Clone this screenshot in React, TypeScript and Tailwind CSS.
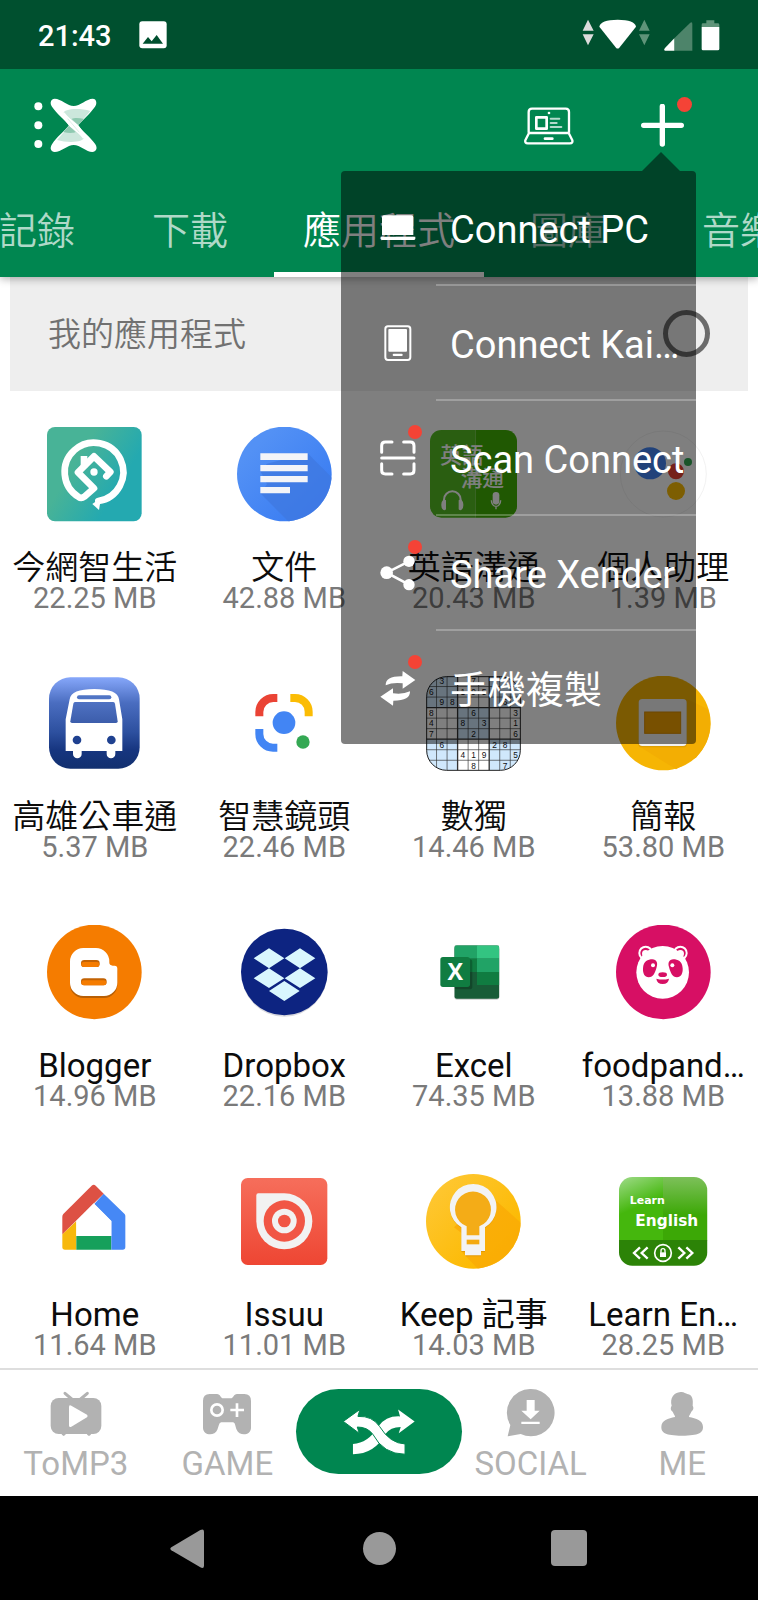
import React from "react";

const sans = "font-[Roboto,'Noto_Sans_CJK_TC',sans-serif]";

function IconFrame({ children }: { children: React.ReactNode }) {
  return (
    <svg viewBox="0 0 285 285" className="size-[95px]" aria-hidden="true">
      {children}
    </svg>
  );
}

function SmartLifeIcon() {
  return (
    <IconFrame>
      <defs>
        <linearGradient id="life" x1="0" y1="0.2" x2="1" y2="0.8">
          <stop offset="0.3" stopColor="#48b397" />
          <stop offset="0.75" stopColor="#24a9b0" />
        </linearGradient>
      </defs>
      <rect width="284" height="283" rx="24" fill="url(#life)" />
      <path
        d="M154 222A88 88 0 1 0 95 210Q103 216 112 209L141 184L93 136L141 88L190 135L178 148"
        fill="none"
        stroke="#fff"
        strokeWidth="20"
        strokeLinejoin="round"
        strokeLinecap="round"
      />
      <rect x="101" y="87" width="20" height="34" fill="#fff" />
      <circle cx="141" cy="135" r="11" fill="#fff" />
      <path d="M136 231L162 212L156 249Z" fill="#fff" />
    </IconFrame>
  );
}

function DocsIcon() {
  return (
    <IconFrame>
      <defs>
        <linearGradient id="docs" x1="0" y1="0" x2="1" y2="1">
          <stop offset="0.2" stopColor="#5391f5" />
          <stop offset="0.8" stopColor="#3c7ef2" />
        </linearGradient>
        <clipPath id="docsClip">
          <circle cx="142" cy="141" r="142" />
        </clipPath>
      </defs>
      <circle cx="142" cy="141" r="142" fill="url(#docs)" />
      <path d="M212 79L300 167V300H171L70 199L90 172L70 132L90 110Z" fill="#3f78e0" opacity="0.75" clipPath="url(#docsClip)" />
      <path d="M70 79H212V99H70ZM70 114H212V133H70ZM70 147H212V166H70ZM70 180H159V199H70Z" fill="#f3f4f8" />
    </IconFrame>
  );
}

function EnglishTalkIcon() {
  return (
    <IconFrame>
      <clipPath id="talkClip">
        <rect x="12" y="9" width="261" height="263" rx="34" />
      </clipPath>
      <g clipPath="url(#talkClip)">
        <path d="M0 0H149V285H0Z" fill="#55bd22" />
        <path d="M149 0H285V285H149Z" fill="#40b104" />
      </g>
      <g fill="#fff" className="font-['Noto_Sans_CJK_TC',sans-serif] font-medium">
        <text x="43" y="107" fontSize="65">英語</text>
        <text x="104" y="176" fontSize="65">溝通</text>
      </g>
      <path d="M54 226V218A25 25 0 0 1 104 218V226" fill="none" stroke="#fff" strokeWidth="6" />
      <path d="M46 232a9 14 0 0 1 14 -12v27a9 14 0 0 1-14-12ZM112 232a9 14 0 0 0-14-12v27a9 14 0 0 0 14-12Z" fill="#fff" />
      <rect x="200" y="195" width="20" height="38" rx="10" fill="#fff" />
      <path d="M196 220a14 18 0 0 0 28 0M210 238V247" fill="none" stroke="#fff" strokeWidth="4" />
    </IconFrame>
  );
}

function AssistantIcon() {
  return (
    <IconFrame>
      <circle cx="142" cy="141" r="129" fill="#fff" stroke="#f2f2f2" strokeWidth="3" />
      <circle cx="102" cy="109" r="48" fill="#4285f4" />
      <circle cx="180" cy="133" r="24" fill="#ea4335" />
      <circle cx="180" cy="192" r="27" fill="#fbbc04" />
      <circle cx="216" cy="105" r="12" fill="#34a853" />
    </IconFrame>
  );
}

function BusIcon() {
  return (
    <IconFrame>
      <defs>
        <linearGradient id="bus" x1="0" y1="0" x2="0" y2="1">
          <stop offset="0" stopColor="#86a7fa" />
          <stop offset="0.28" stopColor="#4a6dc0" />
          <stop offset="0.6" stopColor="#2d509f" />
          <stop offset="0.8" stopColor="#16357f" />
          <stop offset="1" stopColor="#12306f" />
        </linearGradient>
        <linearGradient id="busGlass" x1="0" y1="0" x2="0" y2="1">
          <stop offset="0" stopColor="#4f72c3" />
          <stop offset="1" stopColor="#3c5dab" />
        </linearGradient>
      </defs>
      <rect x="6" y="4" width="272" height="274" rx="64" fill="url(#bus)" />
      <path
        d="M68 70Q72 39 142 39Q212 39 216 70L226 130V225H205V234A13 13 0 0 1 179 234V225H104V234A13 13 0 0 1 78 234V225H56V130Z"
        fill="#fff"
      />
      <path d="M84 78H199Q203 78 204 83L212 136Q212 141 207 141H75Q70 141 70 136L79 83Q80 78 84 78Z" fill="url(#busGlass)" />
      <rect x="90" y="58" width="103" height="12" rx="6" fill="#5075c5" />
      <circle cx="90" cy="192" r="13" fill="#1f4190" />
      <circle cx="193" cy="192" r="13" fill="#1f4190" />
    </IconFrame>
  );
}

function LensIcon() {
  return (
    <IconFrame>
      <g fill="none" strokeWidth="24">
        <path d="M121 66H109A42 42 0 0 0 67 108V121" stroke="#ea4335" />
        <path d="M160 66H174A41 41 0 0 1 215 107V121" stroke="#fbbc04" />
        <path d="M67 159V174A41 41 0 0 0 108 215H121" stroke="#4285f4" />
      </g>
      <circle cx="141" cy="140" r="34" fill="#4285f4" />
      <circle cx="198" cy="198" r="20" fill="#34a853" />
    </IconFrame>
  );
}

const sudoku = [
  " 3  7    ",
  "6  195   ",
  " 98    6 ",
  "8   6   3",
  "4  8 3  1",
  "7   2   6",
  " 6    28 ",
  "   419  5",
  "    8  7 ",
];

function SudokuIcon() {
  const lines = [1, 2, 3, 4, 5, 6, 7, 8];
  return (
    <IconFrame>
      <clipPath id="sudokuClip">
        <rect x="1" y="1" width="282" height="282" rx="60" />
      </clipPath>
      <g clipPath="url(#sudokuClip)">
        <rect width="285" height="285" fill="#fff" />
        <path d="M0 0H95V95H0ZM190 0H285V95H190ZM95 95H190V190H95ZM0 190H95V285H0ZM190 190H285V285H190Z" fill="#d0e8fc" />
        {lines.map((n) => (
          <path
            key={n}
            d={`M${n * 31.6} 0V285M0 ${n * 31.6}H285`}
            stroke="#333"
            strokeWidth={n % 3 === 0 ? 4 : 2}
          />
        ))}
      </g>
      <rect x="2" y="2" width="281" height="281" rx="60" fill="none" stroke="#222" strokeWidth="3" />
      <g className="font-['Liberation_Sans',sans-serif]" fontSize="25" fill="#111" textAnchor="middle">
        {sudoku.map((row, r) =>
          row.split("").map((digit, c) =>
            digit === " " ? null : (
              <text key={`${r}-${c}`} x={c * 31.6 + 16} y={r * 31.6 + 25}>
                {digit}
              </text>
            ),
          ),
        )}
      </g>
    </IconFrame>
  );
}

function SlidesIcon() {
  return (
    <IconFrame>
      <circle cx="142" cy="141" r="142" fill="#f6b504" />
      <path d="M212 69L276 100Q300 180 240 245L180 280L68 210Z" fill="#f3ae03" />
      <rect x="67" y="72" width="146" height="142" rx="11" fill="#c98f05" opacity="0.5" />
      <rect x="68" y="69" width="144" height="141" rx="11" fill="#f1f1f1" />
      <rect x="86" y="108" width="108" height="64" fill="#f0a000" stroke="#d98c00" strokeWidth="3" />
    </IconFrame>
  );
}

const bloggerB =
  "M109 69H147A40 40 0 0 1 187 109V112Q187 122 197 122H203Q211 122 211 131V173A40 40 0 0 1 171 213H109A40 40 0 0 1 69 173V109A40 40 0 0 1 109 69Z";

function BloggerIcon() {
  return (
    <IconFrame>
      <circle cx="142" cy="141" r="142" fill="#f57c00" />
      <g transform="translate(0 6)">
        <path d={bloggerB} fill="#b85f05" />
      </g>
      <path d={bloggerB} fill="#fff" />
      <rect x="102" y="105" width="56" height="21" rx="10" fill="#c26203" />
      <rect x="102" y="160" width="77" height="21" rx="10" fill="#c26203" />
      <rect x="103" y="111" width="54" height="15" rx="7" fill="#f57c00" />
      <rect x="103" y="166" width="75" height="15" rx="7" fill="#f57c00" />
    </IconFrame>
  );
}

function DropboxIcon() {
  return (
    <IconFrame>
      <circle cx="142" cy="146" r="129" fill="#d9d9de" />
      <circle cx="142" cy="141" r="130" fill="#0d2481" />
      <path
        d="M96 70L142 100L96 130L50 100ZM189 70L235 100L189 130L143 100ZM96 130L142 160L96 189L50 160ZM189 130L235 160L189 189L143 160ZM142 168L188 198L142 228L96 198Z"
        fill="#d9f7fe"
      />
    </IconFrame>
  );
}

function ExcelIcon() {
  return (
    <IconFrame>
      <clipPath id="excelClip">
        <rect x="85" y="61" width="135" height="160" rx="7" />
      </clipPath>
      <rect x="85" y="66" width="135" height="158" rx="7" fill="#ccc" />
      <g clipPath="url(#excelClip)">
        <rect x="85" y="61" width="135" height="162" fill="#185c37" />
        <rect x="85" y="61" width="69" height="40" fill="#21a366" />
        <rect x="153" y="61" width="67" height="40" fill="#33c481" />
        <rect x="85" y="101" width="69" height="40" fill="#107c41" />
        <rect x="153" y="101" width="67" height="40" fill="#21a366" />
        <rect x="153" y="141" width="67" height="39" fill="#107c41" />
        <rect x="85" y="103" width="54" height="90" rx="8" fill="#000" opacity="0.22" />
      </g>
      <rect x="43" y="96" width="89" height="90" rx="8" fill="#107c41" />
      <text x="88" y="166" fontSize="70" textAnchor="middle" fill="#fff" className="font-['Open_Sans',sans-serif] font-bold">
        X
      </text>
    </IconFrame>
  );
}

function PandaIcon() {
  return (
    <IconFrame>
      <circle cx="142" cy="141" r="142" fill="#d70f64" />
      <circle cx="89" cy="84" r="22" fill="#fff" />
      <circle cx="193" cy="84" r="22" fill="#fff" />
      <circle cx="89" cy="84" r="16" fill="#d70f64" />
      <circle cx="193" cy="84" r="16" fill="#d70f64" />
      <circle cx="89" cy="86" r="11" fill="#fff" />
      <circle cx="193" cy="86" r="11" fill="#fff" />
      <circle cx="140" cy="142" r="79" fill="#fff" />
      <path d="M81 130C82 108 96 103 109 103C122 104 126 114 122 126C118 142 112 157 98 157C86 156 80 146 81 130Z" fill="#d70f64" />
      <path d="M200 130C199 108 185 103 172 103C159 104 155 114 159 126C163 142 169 157 183 157C195 156 201 146 200 130Z" fill="#d70f64" />
      <circle cx="111" cy="121" r="6" fill="#fff" />
      <circle cx="169" cy="121" r="6" fill="#fff" />
      <ellipse cx="140" cy="149" rx="13" ry="7" fill="#d70f64" />
      <path d="M121 161Q140 166 159 161Q157 177 140 177Q123 177 121 161Z" fill="#d70f64" />
    </IconFrame>
  );
}

function HomeIcon() {
  return (
    <IconFrame>
      <path d="M46 181L88 141V227H54Q46 227 46 219Z" fill="#f7b80c" />
      <path d="M88 186H193V227H88Z" fill="#16a05b" />
      <path d="M170 59L232 119Q235 122 235 126V219Q235 227 227 227H193V141L142 90Z" fill="#4688f5" />
      <path d="M46 181V128Q46 123 49 120L134 35Q140 30 146 35L170 59L46 181Z" fill="#dd5144" />
      <path d="M140 88L193 141V186H88V141Z" fill="#fff" />
    </IconFrame>
  );
}

function IssuuIcon() {
  return (
    <IconFrame>
      <defs>
        <linearGradient id="issuu" x1="0" y1="0" x2="0" y2="1">
          <stop offset="0" stopColor="#f66e5b" />
          <stop offset="1" stopColor="#ee4633" />
        </linearGradient>
      </defs>
      <rect x="12" y="12" width="259" height="261" rx="20" fill="url(#issuu)" />
      <path d="M58 64Q58 58 64 58H142A84 84 0 1 1 58 142Z" fill="#f2f2f2" />
      <circle cx="142" cy="141" r="62" fill="#f15645" />
      <circle cx="142" cy="141" r="37" fill="#f2f2f2" />
      <circle cx="142" cy="141" r="19" fill="#f15645" />
    </IconFrame>
  );
}

function KeepIcon() {
  return (
    <IconFrame>
      <defs>
        <linearGradient id="keep" x1="0" y1="0" x2="1" y2="1">
          <stop offset="0.15" stopColor="#fec62f" />
          <stop offset="0.8" stopColor="#fcb900" />
        </linearGradient>
        <clipPath id="keepClip">
          <circle cx="142" cy="142" r="142" />
        </clipPath>
      </defs>
      <circle cx="142" cy="142" r="142" fill="url(#keep)" />
      <path d="M190 62L300 160V300H170L110 236V180L84 160Z" fill="#f9aa05" opacity="0.75" clipPath="url(#keepClip)" />
      <path d="M106 170V162A70 70 0 1 1 177 162V234H165V247H119V234H106Z" fill="#c98300" opacity="0.45" />
      <path d="M106 167V160A70 70 0 1 1 177 160V231H165V244H117V231H106Z" fill="#f3f3f3" />
      <path d="M122 184V157A54 54 0 1 1 160 157V184Z" fill="#f4ac17" />
      <path d="M122 197H160V211H122Z" fill="#f4a90e" />
    </IconFrame>
  );
}

function LearnIcon() {
  return (
    <IconFrame>
      <defs>
        <linearGradient id="learnA" x1="0" y1="0" x2="0.3" y2="1">
          <stop offset="0.05" stopColor="#97d87e" />
          <stop offset="0.55" stopColor="#45b70d" />
        </linearGradient>
        <linearGradient id="learnB" x1="0" y1="0" x2="0" y2="1">
          <stop offset="0" stopColor="#7dc05a" />
          <stop offset="0.6" stopColor="#3ca806" />
        </linearGradient>
        <clipPath id="learnClip">
          <rect x="9" y="9" width="265" height="266" rx="40" />
        </clipPath>
      </defs>
      <g clipPath="url(#learnClip)">
        <rect x="9" y="9" width="133" height="190" fill="url(#learnA)" />
        <rect x="141" y="9" width="134" height="190" fill="url(#learnB)" />
        <rect x="9" y="198" width="266" height="78" fill="#2c8307" />
      </g>
      <g fill="#fff" className="font-['DejaVu_Sans',sans-serif] font-bold">
        <text x="41" y="91" fontSize="33">Learn</text>
        <text x="58" y="155" fontSize="46">English</text>
      </g>
      <g fill="none" stroke="#fff" strokeWidth="7">
        <path d="M72 220L54 237L72 254M95 220L77 237L95 254M187 220L205 237L187 254M211 220L229 237L211 254" />
        <circle cx="141" cy="237" r="25" strokeWidth="5" />
        <path d="M135 236V230A6 6 0 0 1 147 230V236" strokeWidth="4" />
      </g>
      <rect x="132" y="235" width="18" height="14" fill="#fff" />
    </IconFrame>
  );
}

const apps = [
  { name: "今網智生活", size: "22.25 MB", Icon: SmartLifeIcon },
  { name: "文件", size: "42.88 MB", Icon: DocsIcon },
  { name: "英語溝通", size: "20.43 MB", Icon: EnglishTalkIcon },
  { name: "個人助理", size: "1.39 MB", Icon: AssistantIcon },
  { name: "高雄公車通", size: "5.37 MB", Icon: BusIcon },
  { name: "智慧鏡頭", size: "22.46 MB", Icon: LensIcon },
  { name: "數獨", size: "14.46 MB", Icon: SudokuIcon },
  { name: "簡報", size: "53.80 MB", Icon: SlidesIcon },
  { name: "Blogger", size: "14.96 MB", Icon: BloggerIcon },
  { name: "Dropbox", size: "22.16 MB", Icon: DropboxIcon },
  { name: "Excel", size: "74.35 MB", Icon: ExcelIcon },
  { name: "foodpand…", size: "13.88 MB", Icon: PandaIcon },
  { name: "Home", size: "11.64 MB", Icon: HomeIcon },
  { name: "Issuu", size: "11.01 MB", Icon: IssuuIcon },
  { name: "Keep 記事", size: "14.03 MB", Icon: KeepIcon },
  { name: "Learn En…", size: "28.25 MB", Icon: LearnIcon },
];

function StatusBar() {
  return (
    <div className="relative z-20 flex h-[69px] items-center bg-[#00502f] pr-[38px] pl-[38px]">
      <span className="pt-[2px] text-[29px] leading-[34px] font-medium text-white">21:43</span>
      <svg viewBox="417 62 84 84" className="ml-[27px] size-7" aria-hidden="true">
        <rect x="418" y="63" width="82" height="81" rx="9" fill="#fff" />
        <path d="M428 130L444 110L455 123L470 104L489 130Z" fill="#00502f" />
      </svg>
      <svg viewBox="608 55 414 96" className="ml-auto h-8 w-[138px]" aria-hidden="true">
        <path d="M610 90L626 57L643 90ZM610 101L626 134L643 101Z" fill="#dcdcdc" />
        <path d="M660 78Q664 57 715 57Q766 57 770 78L720 141Q715 146 710 141Z" fill="#fff" />
        <path d="M779 90L795 57L811 90ZM779 101L795 134L811 101Z" fill="#5f9479" />
        <path d="M885 113L932 67Q939 62 939 70V150H885Z" fill="#4d846a" />
        <path d="M885 113V150H857Q852 148 857 142Z" fill="#fff" />
        <path d="M967 79V72Q967 68 971 68H981V59H1005V68H1015Q1020 68 1020 72V79Z" fill="#5f9479" />
        <path d="M967 79H1020V145Q1020 149 1015 149H971Q967 149 967 145Z" fill="#fff" />
      </svg>
    </div>
  );
}

function XenderLogo() {
  return (
    <svg viewBox="104 295 192 165" className="h-[55px] w-16" aria-hidden="true">
      <circle cx="117" cy="320" r="12" fill="#fff" />
      <circle cx="117" cy="377" r="12" fill="#fff" />
      <circle cx="117" cy="433" r="12" fill="#fff" />
      <path
        d="M166 297C185 297 205 319 223 319C242 319 262 297 280 297C292 297 294 312 287 321C270 345 250 360 236 377C250 395 272 412 288 434C296 446 290 457 279 457C262 457 242 436 223 436C205 436 185 457 166 457C155 457 150 446 158 434C172 412 195 395 209 377C195 360 172 342 158 321C150 310 155 297 166 297Z"
        fill="#fff"
      />
      <path d="M193 342C190 327 240 324 273 334L236 377Z" fill="#cce7dc" />
      <path d="M253 413C256 428 206 431 173 421L210 378Z" fill="#cce7dc" />
      <path d="M217 358C225 354 240 355 254 358L237 377Z" fill="#8fc9b0" />
      <path d="M229 397C221 401 206 400 192 397L209 378Z" fill="#8fc9b0" />
      <path d="M193 340Q205 357 236 380L252 403M253 415Q241 398 210 375L194 352" fill="none" stroke="#fff" strokeWidth="6" />
      <path d="M205 357L240 398" stroke="#cce7dc" strokeWidth="2" />
    </svg>
  );
}

const menuItems = [
  {
    label: "Connect PC",
    badge: false,
    icon: (
      <svg viewBox="382 629 108 108" className="size-9" aria-hidden="true">
        <path d="M394 645H476Q482 645 482 651V704H388V651Q388 645 394 645ZM384 709H488V715Q488 719 482 719H390Q384 719 384 715Z" fill="#fff" />
      </svg>
    ),
  },
  {
    label: "Connect Kai…",
    badge: false,
    icon: (
      <svg viewBox="150 164 108 108" className="size-9" aria-hidden="true">
        <rect x="166" y="168" width="75" height="101" rx="8" fill="none" stroke="#fff" strokeWidth="6" />
        <rect x="175" y="176" width="56" height="68" rx="3" fill="#fff" />
        <rect x="188" y="250" width="30" height="7" rx="3" fill="#fff" />
      </svg>
    ),
  },
  {
    label: "Scan Connect",
    badge: true,
    icon: (
      <svg viewBox="150 508 108 108" className="size-9" aria-hidden="true">
        <path
          d="M155 545V525Q155 514 166 514H186M221 514H241Q252 514 252 525V545M155 579V599Q155 610 166 610H186M221 610H241Q252 610 252 599V579M155 562H252"
          fill="none"
          stroke="#fff"
          strokeWidth="9"
          strokeLinecap="round"
        />
      </svg>
    ),
  },
  {
    label: "Share Xender",
    badge: true,
    icon: (
      <svg viewBox="150 853 108 108" className="size-9" aria-hidden="true">
        <path d="M237 872L170 906L237 942" fill="none" stroke="#fff" strokeWidth="8" />
        <circle cx="170" cy="906" r="19" fill="#fff" />
        <circle cx="237" cy="872" r="17" fill="#fff" />
        <circle cx="237" cy="942" r="17" fill="#fff" />
      </svg>
    ),
  },
  {
    label: "手機複製",
    badge: true,
    icon: (
      <svg viewBox="148 208 108 108" className="size-9" aria-hidden="true">
        <path d="M165 254Q164 226 215 227L216 211L254 238L216 264V248Q186 244 165 254Z" fill="#fff" />
        <path d="M238 272Q240 300 188 300L187 315L149 288L187 263V278Q217 282 238 272Z" fill="#fff" />
      </svg>
    ),
  },
];

function ConnectMenu() {
  return (
    <div className="absolute top-[83px] right-[62px] z-20 w-[355px]">
      <svg viewBox="0 0 38 19" className="mr-4 ml-auto block h-[19px] w-[38px]" aria-hidden="true">
        <path d="M0 19L19 0L38 19Z" fill="#000" fillOpacity="0.5" />
      </svg>
      <ul className="rounded bg-black/50">
        {menuItems.map((item, i) => (
          <li key={item.label}>
            {i > 0 && <div className="ml-[95px] h-[2px] bg-white/25" />}
            <button type="button" className="flex h-[113px] w-full items-center gap-[34px] pl-[39px] text-left">
              <span className="relative shrink-0">
                {item.icon}
                {item.badge && <span className="absolute -top-[15px] -right-1.5 size-3.5 rounded-full bg-[#f44336]" />}
              </span>
              <span className="pt-1 text-[38px] leading-[44px] whitespace-nowrap text-white">{item.label}</span>
            </button>
          </li>
        ))}
      </ul>
    </div>
  );
}

function Header() {
  return (
    <header className="relative z-10 bg-[#008650] shadow-[0_2px_8px_rgba(0,0,0,0.3)]">
      <div className="flex h-[113px] items-center pr-[65px] pl-[34px]">
        <button type="button" aria-label="Menu">
          <XenderLogo />
        </button>
        <button type="button" aria-label="PC" className="ml-auto">
          <svg viewBox="437 318 150 114" className="h-[38px] w-[50px]" aria-hidden="true">
            <g fill="none" stroke="#fff" strokeWidth="7" strokeLinejoin="round">
              <path d="M451 395V333Q451 323 461 323H562Q572 323 572 333V395" />
              <path d="M452 396H571L582 418Q584 427 575 427H448Q439 427 441 418Z" />
              <rect x="474" y="349" width="31" height="34" strokeWidth="8" />
            </g>
            <circle cx="512" cy="336" r="4" fill="#fff" />
            <path d="M500 413H522" stroke="#fff" strokeWidth="8" strokeLinecap="round" />
            <path d="M517 353H543M517 366H535M517 378H549" stroke="#b3dacb" strokeWidth="6" strokeLinecap="round" />
          </svg>
        </button>
        <button type="button" aria-label="Connect" className="relative mr-[9px] ml-[67px] py-1">
          <svg viewBox="787 312 129 129" className="size-[43px]" aria-hidden="true">
            <path d="M795 376H908M851 319V432" stroke="#fff" strokeWidth="16" strokeLinecap="round" />
          </svg>
          <span className="absolute -top-[3px] -right-2 size-[15px] rounded-full bg-[#f44336]" />
        </button>
      </div>
      <nav className="flex h-[95px] overflow-hidden pt-[2px] text-[38px] leading-[44px] font-[350] whitespace-nowrap text-white/70">
        <button type="button" className="flex w-[106px] shrink-0 items-center justify-end pr-[31px]">記錄</button>
        <button type="button" className="w-[168px] shrink-0">下載</button>
        <button type="button" className="w-[210px] shrink-0 border-y-[5px] border-t-transparent border-b-white text-white">應用程式</button>
        <button type="button" className="w-[168px] shrink-0">圖庫</button>
        <button type="button" className="w-[176px] shrink-0">音樂</button>
      </nav>
      <ConnectMenu />
      <div className="absolute right-12 -bottom-[80px] size-[47px] rounded-full border-[5px] border-black/55" />
    </header>
  );
}

const navItem = "flex min-w-0 flex-1 flex-col items-center gap-[7px] pt-[19px]";
const navIcon = "h-12 w-[52px]";
const navLabel = "text-[33px] leading-[39px] text-[#b2b2b2]";

function BottomNav() {
  return (
    <nav className="flex h-32 border-t-2 border-[#dedede] bg-white">
      <a href="#tomp3" className={navItem}>
        <svg viewBox="148 84 156 144" className={navIcon} fill="#b2b2b2" aria-hidden="true">
          <rect x="150" y="111" width="152" height="108" rx="24" />
          <path d="M193 97L213 114M260 97L240 114" stroke="#b2b2b2" strokeWidth="9" strokeLinecap="round" />
          <path d="M181 217H197Q189 233 181 217ZM257 217H273Q265 233 257 217Z" />
          <path d="M205 137Q206 131 212 134L259 161Q263 165 259 169L212 197Q206 200 205 194Z" fill="#fff" />
        </svg>
        <span className={navLabel}>ToMP3</span>
      </a>
      <a href="#game" className={navItem}>
        <svg viewBox="603 84 156 144" className={navIcon} fill="#b2b2b2" aria-hidden="true">
          <path d="M629 99H651C661 99 662 112 670 112H692C700 112 701 99 711 99H733Q753 99 753 120V200C753 224 718 226 710 206C704 192 707 184 696 184H667C656 184 658 192 652 206C644 226 609 224 609 200V120Q609 99 629 99Z" />
          <circle cx="651" cy="147" r="17" fill="none" stroke="#fff" strokeWidth="8" />
          <path d="M691 147H732M711 127V168" stroke="#fff" strokeWidth="8" />
        </svg>
        <span className={navLabel}>GAME</span>
      </a>
      <div className="flex min-w-0 flex-1 justify-center pt-[19px]">
        <button type="button" aria-label="Transfer" className="flex h-[85px] w-[166px] shrink-0 items-center justify-center rounded-full bg-[#008650]">
          <svg viewBox="1029 147 217 136" className="h-[46px] w-[72px]" aria-hidden="true">
            <path
              d="M1245 183L1195 147L1201 168Q1158 166 1136 198Q1104 250 1059 251V282Q1124 282 1156 222Q1172 200 1203 200L1197 219Z"
              fill="#fff"
            />
            <path
              d="M1030 183L1080 147L1074 168Q1117 166 1139 198Q1171 250 1216 251V282Q1151 282 1119 222Q1103 200 1072 200L1078 219Z"
              fill="#fff"
              stroke="#008650"
              strokeWidth="3"
            />
          </svg>
        </button>
      </div>
      <a href="#social" className={navItem}>
        <svg viewBox="379 84 156 144" className={navIcon} fill="#b2b2b2" aria-hidden="true">
          <path d="M457 84A71 71 0 1 1 426 219L387 226L395 192A71 71 0 0 1 457 84Z" />
          <path d="M444 117H468V149H483L456 175L428 149H444ZM428 182H483V189H428Z" fill="#fff" />
        </svg>
        <span className={navLabel}>SOCIAL</span>
      </a>
      <a href="#me" className={navItem}>
        <svg viewBox="830 84 156 144" className={navIcon} fill="#b2b2b2" aria-hidden="true">
          <path d="M877 134C871 112 883 94 904 93C914 92 919 98 924 99C940 101 942 117 940 134C945 142 940 149 936 152C933 160 928 164 929 168C950 172 971 178 971 198C971 215 959 224 908 224C858 224 846 215 846 198C846 178 867 172 887 168C888 164 883 160 880 152C875 149 872 142 877 134Z" />
        </svg>
        <span className={navLabel}>ME</span>
      </a>
    </nav>
  );
}

function SystemNav() {
  return (
    <div className="flex h-[104px] items-center justify-center bg-black">
      <button type="button" aria-label="Back" className="flex w-[190px] justify-center">
        <svg viewBox="511 504 105 117" className="mr-1 h-[39px] w-[35px]" aria-hidden="true">
          <path d="M515 559L602 507Q613 502 613 512V614Q613 624 602 619L515 568Q509 563 515 559Z" fill="#999" />
        </svg>
      </button>
      <button type="button" aria-label="Home" className="flex w-[190px] justify-center">
        <span className="size-[33px] rounded-full bg-[#999]" />
      </button>
      <button type="button" aria-label="Recents" className="flex w-[190px] justify-center">
        <span className="size-9 rounded bg-[#999]" />
      </button>
    </div>
  );
}

// The CJK face looks heavier than Roboto at the same weight, so purely Chinese names are set lighter.
const hasLatin = (text: string) => /[A-Za-z]/.test(text);

export default function App() {
  return (
    <div className={`${sans} min-h-screen overflow-hidden bg-white`}>
      <StatusBar />
      <Header />
      <main>
        <h2 className="mx-[10px] bg-[#eee] pt-[38px] pb-[37px] pl-[38px] text-[33px] leading-[39px] font-[350] text-[#717171]">
          我的應用程式
        </h2>
        <ul className="grid grid-cols-4 gap-y-16 pt-9 pb-[9px]">
          {apps.map(({ name, size, Icon }) => (
            <li key={name} className="flex flex-col items-center">
              <Icon />
              <span
                className={`mt-[30px] text-[33px] leading-8 whitespace-nowrap text-[#0c0c0c] ${
                  hasLatin(name) ? "font-normal" : "font-[350]"
                }`}
              >
                {name}
              </span>
              <span className="text-[29px] leading-7 whitespace-nowrap text-[#7a7a7a]">{size}</span>
            </li>
          ))}
        </ul>
      </main>
      <BottomNav />
      <SystemNav />
    </div>
  );
}
